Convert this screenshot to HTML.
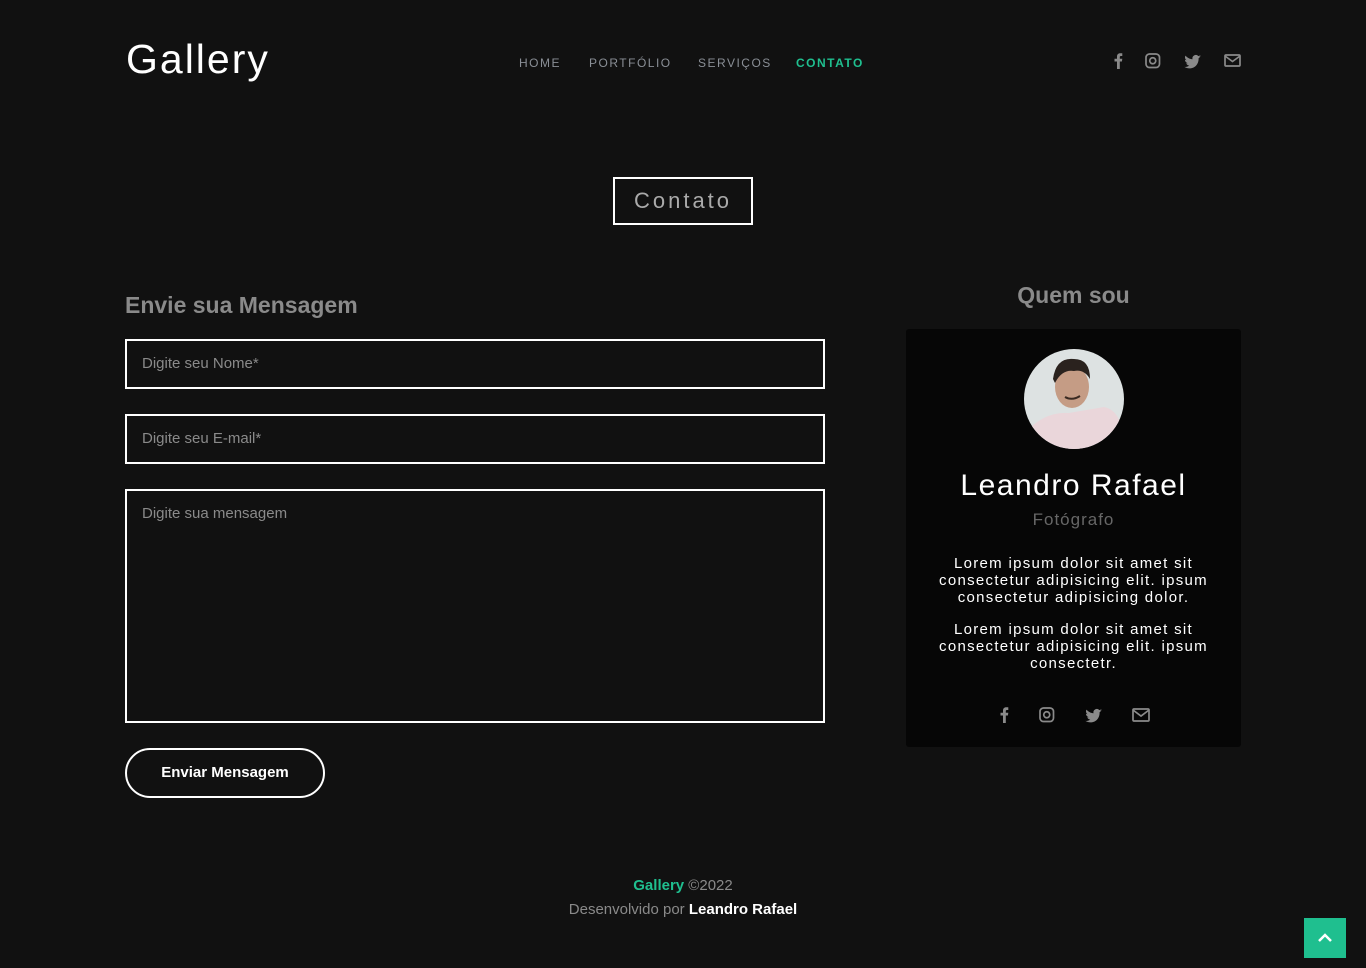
<!DOCTYPE html>
<html><head><meta charset="utf-8"><style>
*{margin:0;padding:0;box-sizing:border-box}
body{width:1366px;height:968px;background:#111111;font-family:"Liberation Sans",sans-serif;position:relative;overflow:hidden;color:#fff}
.a{position:absolute}
.logo{left:126px;top:36px;font-size:41px;font-weight:300;letter-spacing:2px;color:#fff}
.nav{top:56px;font-size:12px;letter-spacing:1.5px;color:#8a8f96}
.ic{fill:#8a8a8a}
.title{left:613px;top:177px;width:140px;height:48px;border:2px solid #fff;color:#aaa;font-size:22px;letter-spacing:3px;text-align:center;line-height:44px}
h3{position:absolute;font-size:23px;color:#8a8a8a;font-weight:bold}
.inp{position:absolute;left:125px;width:700px;border:2px solid #fff;color:#8a8a8a;font-size:15px;padding-left:15px}
.btn{left:125px;top:748px;width:200px;height:50px;border:2px solid #fff;border-radius:25px;text-align:center;line-height:46px;font-size:15px;font-weight:bold}
.card{left:906px;top:329px;width:335px;height:418px;background:#060606;border-radius:3px}
.av{left:118px;top:20px;width:100px;height:100px;border-radius:50%;overflow:hidden;background:#dde2e2}
.p{width:335px;text-align:center;font-size:15px;line-height:17px;letter-spacing:1px}
.top{right:20px;bottom:10px;width:42px;height:40px;background:#1fbf8f}
</style></head><body>
<div class="a logo">Gallery</div>
<div class="a nav" style="left:519px">HOME</div>
<div class="a nav" style="left:589px">PORTFÓLIO</div>
<div class="a nav" style="left:698px">SERVIÇOS</div>
<div class="a nav" style="left:796px;color:#1fbf8f;font-weight:bold">CONTATO</div>
<svg class="a" style="left:1105px;top:51px" width="145" height="22">
<path class="ic" d="M12 18V10.5H9.5V7.8H12V5.6c0-2.2 1.2-3.4 3.3-3.4h2V5h-1.3c-.9 0-1.2.4-1.2 1.1v1.7h2.5l-.4 2.7h-2.1V18z"/>
<rect x="41" y="3" width="13.5" height="13.5" rx="3.5" fill="none" stroke="#8a8a8a" stroke-width="1.7"/><circle cx="47.75" cy="9.75" r="3" fill="none" stroke="#8a8a8a" stroke-width="1.7"/>
<path class="ic" d="M96 5.5c-.6.3-1.3.5-2 .6.7-.4 1.3-1.1 1.5-1.9-.7.4-1.4.7-2.2.9a3.4 3.4 0 0 0-5.8 3.1c-2.8-.1-5.3-1.5-7-3.6-1 1.6-.4 3.6 1 4.6-.6 0-1.1-.2-1.5-.4 0 1.6 1.1 3 2.7 3.3-.5.1-1 .2-1.5.1.4 1.3 1.7 2.3 3.1 2.3-1.4 1.1-3.3 1.6-5 1.4 6.5 4 14.6-.3 14.3-8.7.8-.5 1.4-1.1 1.9-1.8z"/>
<rect x="120" y="4" width="15" height="11" rx="1" fill="none" stroke="#8a8a8a" stroke-width="1.7"/><path d="M120 5l7.5 5.5L135 5" fill="none" stroke="#8a8a8a" stroke-width="1.7"/>
</svg>
<div class="a title">Contato</div>
<h3 style="left:125px;top:292px">Envie sua Mensagem</h3>
<div class="inp" style="top:339px;height:50px;line-height:46px">Digite seu Nome*</div>
<div class="inp" style="top:414px;height:50px;line-height:46px">Digite seu E-mail*</div>
<div class="inp" style="top:489px;height:234px;padding-top:14px">Digite sua mensagem</div>
<div class="a btn">Enviar Mensagem</div>
<h3 style="left:906px;width:335px;text-align:center;top:282px">Quem sou</h3>
<div class="a card">
<div class="a av"><svg width="100" height="100">
<path d="M0 85 Q20 62 45 64 L80 58 Q100 62 100 100 L0 100z" fill="#ead6da"/>
<ellipse cx="48" cy="38" rx="17" ry="21" fill="#c59c85"/>
<path d="M29 30 Q32 8 50 10 Q66 10 66 30 Q60 20 50 22 Q38 20 31 34z" fill="#2a221e"/>
<path d="M41 48 Q48 52 56 47" stroke="#3a2a22" stroke-width="2" fill="none"/>
</svg></div>
<div class="a p" style="top:140px;font-size:30px;line-height:34px;letter-spacing:1.5px;font-weight:300">Leandro Rafael</div>
<div class="a p" style="top:182px;font-size:17px;color:#666">Fotógrafo</div>
<div class="a p" style="top:226px;padding:0 18px;font-size:15px;letter-spacing:1.3px">Lorem ipsum dolor sit amet sit consectetur adipisicing elit. ipsum consectetur adipisicing dolor.</div>
<div class="a p" style="top:292px;padding:0 18px;font-size:15px;letter-spacing:1.3px">Lorem ipsum dolor sit amet sit consectetur adipisicing elit. ipsum consectetr.</div>
<svg class="a" style="left:88px;top:376px" width="160" height="22">
<path class="ic" d="M9 18V10.5H6.5V7.8H9V5.6c0-2.2 1.2-3.4 3.3-3.4h2V5h-1.3c-.9 0-1.2.4-1.2 1.1v1.7h2.5l-.4 2.7h-2.1V18z"/>
<rect x="46" y="3" width="13.5" height="13.5" rx="3.5" fill="none" stroke="#8a8a8a" stroke-width="1.7"/><circle cx="52.75" cy="9.75" r="3" fill="none" stroke="#8a8a8a" stroke-width="1.7"/>
<path class="ic" d="M108 5.5c-.6.3-1.3.5-2 .6.7-.4 1.3-1.1 1.5-1.9-.7.4-1.4.7-2.2.9a3.4 3.4 0 0 0-5.8 3.1c-2.8-.1-5.3-1.5-7-3.6-1 1.6-.4 3.6 1 4.6-.6 0-1.1-.2-1.5-.4 0 1.6 1.1 3 2.7 3.3-.5.1-1 .2-1.5.1.4 1.3 1.700 2.3 3.1 2.3-1.4 1.1-3.3 1.6-5 1.4 6.5 4 14.6-.3 14.3-8.7.8-.5 1.4-1.1 1.9-1.8z"/>
<rect x="139" y="4" width="16" height="12" rx="1" fill="none" stroke="#8a8a8a" stroke-width="1.7"/><path d="M139 5l8 6 8-6" fill="none" stroke="#8a8a8a" stroke-width="1.7"/>
</svg>
</div>
<div class="a" style="left:0;width:1366px;top:877px;text-align:center;font-size:15px;color:#8a8a8a"><b style="color:#1fbf8f">Gallery</b> ©2022</div>
<div class="a" style="left:0;width:1366px;top:901px;text-align:center;font-size:15px;color:#8a8a8a">Desenvolvido por <span style="color:#fff;font-weight:bold">Leandro Rafael</span></div>
<div class="a top"><svg width="42" height="40"><path d="M15 23l6-6 6 6" fill="none" stroke="#fff" stroke-width="2.5"/></svg></div>
</body></html>
